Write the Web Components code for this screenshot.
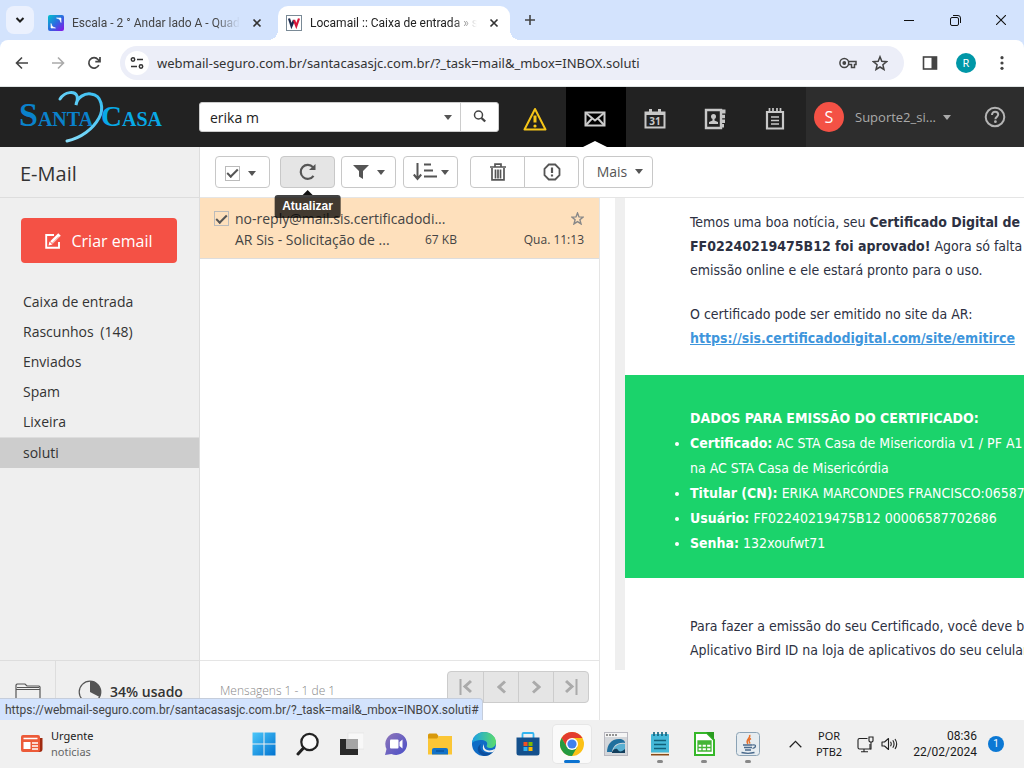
<!DOCTYPE html>
<html lang="pt-BR">
<head>
<meta charset="utf-8">
<title>Locamail :: Caixa de entrada</title>
<meta name="viewport" content="width=device-width, initial-scale=1">
<style>
  html, body { margin: 0; height: 100%; }
  body { font-family: "Open Sans", "Noto Sans", sans-serif; color: #333; overflow: hidden; }
</style>
</head>
<body>
<desktop-screen></desktop-screen>

<script>
const base = `
  *, *::before, *::after { box-sizing: border-box; }
  button { font: inherit; color: inherit; background: none; border: 0; padding: 0; margin: 0; }
  input { font: inherit; color: inherit; margin: 0; }
  a { color: inherit; text-decoration: none; }
`;

function define(name, css, html, setup) {
  const template = document.createElement('template');
  template.innerHTML = `<style>${base}${css}</style>${html}`;
  customElements.define(name, class extends HTMLElement {
    constructor() {
      super();
      this.attachShadow({ mode: 'open' }).append(template.content.cloneNode(true));
    }
    connectedCallback() { if (setup) setup.call(this, this.shadowRoot); }
  });
}

/* [width, height, markup] */
const icons = {
  chevron: [10, 10, '<path d="M1.500 3l3.500 3.500L8.500 3" fill="none" stroke="#1f1f1f" stroke-width="2"/>'],
  escala: [16, 16, '<defs><linearGradient id="g" x1="0" y1="0" x2="1" y2="1"><stop offset="0" stop-color="#00c4cc"/><stop offset=".5" stop-color="#2b6be0"/><stop offset="1" stop-color="#8b10e8"/></linearGradient></defs><rect width="16" height="16" rx="2" fill="url(#g)"/><path d="M8.500 3H13v4.500C12.500 5 11 3.500 8.500 3zM7.500 13H3V8.500C3.500 11 5 12.500 7.500 13z" fill="#fff" stroke="#fff" stroke-width=".6"/>'],
  locamail: [16, 16, '<rect x=".5" y=".5" width="15" height="15" fill="#fff" stroke="#7a8a96"/><path d="M3 3.500l2.500 7.500L8 5" fill="none" stroke="#1b2a4e" stroke-width="2.200"/><path d="M8 5l2.300 6L13 3.500" fill="none" stroke="#d8173a" stroke-width="2.200"/>'],
  close: [10, 10, '<path d="M1.500 1.500l7 7M8.500 1.500l-7 7" stroke="#333" stroke-width="1.700"/>'],
  plus: [12, 12, '<path d="M6 1v10M1 6h10" stroke="#444" stroke-width="1.600"/>'],
  min: [10, 10, '<path d="M0 5.500h10" stroke="#111"/>'],
  restore: [11, 11, '<rect x=".5" y="2.500" width="8" height="8" rx="1.500" fill="none" stroke="#111"/><path d="M3 .5h5a2.500 2.500 0 0 1 2.500 2.500v5" fill="none" stroke="#111"/>'],
  winclose: [10, 10, '<path d="M0 0l10 10M10 0L0 10" stroke="#111" stroke-width="1.100"/>'],
  back: [14, 14, '<path d="M13 7H2M7 1.500L1.500 7 7 12.500" fill="none" stroke="#444" stroke-width="1.600"/>'],
  forward: [14, 14, '<path d="M1 7h11M7 1.500L12.500 7 7 12.500" fill="none" stroke="#aaa" stroke-width="1.600"/>'],
  reload: [14, 14, '<path d="M11.800 9A5.200 5.200 0 1 1 11 3.500L12.500 5M13 1v4.700H8.300" fill="none" stroke="#444" stroke-width="1.700"/>'],
  tune: [14, 14, '<path d="M7 3.500h6M1 10.500h6" stroke="#333" stroke-width="1.700"/><circle cx="3" cy="3.500" r="1.700" fill="none" stroke="#333" stroke-width="1.500"/><circle cx="11" cy="10.500" r="1.700" fill="none" stroke="#333" stroke-width="1.500"/>'],
  key: [18, 12, '<path d="M9.500 4.500H17v3h-1.500v3h-3v-3h-3" fill="none" stroke="#444" stroke-width="1.500"/><circle cx="5.300" cy="6" r="4.400" fill="none" stroke="#444" stroke-width="1.500"/><circle cx="5.300" cy="6" r="1.900" fill="#444"/>'],
  star: [16, 16, '<path d="M8 1.800l1.800 4.500 4.700.4-3.600 3.100 1.100 4.700L8 12l-4 2.500 1.100-4.700-3.600-3.100 4.700-.4z" fill="none" stroke="#444" stroke-width="1.500"/>'],
  panel: [16, 16, '<rect x="1.500" y="2" width="13" height="12" fill="none" stroke="#444" stroke-width="1.600"/><path d="M9.500 2h5v12h-5z" fill="#444"/>'],
  dots: [4, 16, '<circle cx="2" cy="2.700" r="1.600" fill="#444"/><circle cx="2" cy="8" r="1.600" fill="#444"/><circle cx="2" cy="13.300" r="1.600" fill="#444"/>'],
  caret: [8, 5, '<path d="M0 0h8L4 5z" fill="currentColor"/>'],
  search: [14, 14, '<circle cx="5.500" cy="5" r="4" fill="none" stroke="#444" stroke-width="1.500"/><path d="M8.500 8l3.700 3.500" stroke="#444" stroke-width="2.400"/>'],
  warning: [24, 24, '<path d="M12 2L22.500 22.500h-21z" fill="none" stroke="#f5c518" stroke-width="2" stroke-linejoin="round"/><path d="M12 8.500v7" stroke="#f5c518" stroke-width="3"/><circle cx="12" cy="19" r="1.600" fill="#f5c518"/>'],
  mail: [22, 16, '<path d="M1.500 1.500h19v13h-19z" fill="none" stroke="#ccc" stroke-width="2"/><path d="M2 2l9 7.500L20 2M2 14l6-6.500M20 14l-6-6.500" fill="none" stroke="#ccc" stroke-width="2"/>'],
  calendar: [22, 20, '<path d="M1.500 3.500h19v15h-19z" fill="none" stroke="#c8c8c8" stroke-width="2"/><path d="M1 3h4V0h3v3h6V0h3v3h4v3H1z" fill="#c8c8c8"/><text x="11" y="15.500" text-anchor="middle" font-family="Open Sans" font-weight="700" font-size="10" fill="#c8c8c8">31</text>'],
  contacts: [22, 22, '<path d="M2 2h15v18H2z" fill="none" stroke="#c8c8c8" stroke-width="2.400"/><path d="M18 1.500h3.500v4H18zM18 6.800h3v3.500h-3zM18 11.500h3v3.500h-3zM17 16h3v3.500h-3z" fill="#c8c8c8"/><circle cx="9.500" cy="8.500" r="2.500" fill="#c8c8c8"/><path d="M8.500 10h2v2.500l3.500 1.500v2H5v-2l3.500-1.500z" fill="#c8c8c8"/>'],
  notes: [20, 22, '<path d="M2 4h16v16.500H2z" fill="none" stroke="#c8c8c8" stroke-width="2.200"/><path d="M4.500 0v5M8 0v5M12 0v5M15.500 0v5M6 9h8M6 12.500h8M6 16h8" stroke="#c8c8c8" stroke-width="1.700"/>'],
  help: [22, 22, '<circle cx="11" cy="11" r="9.300" fill="none" stroke="#b4b4b4" stroke-width="2"/><path d="M8 9c0-4.500 6.200-4 6.200-.4 0 2.400-2.800 2.200-2.800 4.700" fill="none" stroke="#b4b4b4" stroke-width="2"/><circle cx="11.400" cy="15.700" r="1.400" fill="#b4b4b4"/>'],
  refresh: [18, 18, '<path d="M14.500 12.800A7 7 0 1 1 14 4.200" fill="none" stroke="#555" stroke-width="2.200"/><path d="M16.500 1v6h-6.500z" fill="#555"/>'],
  filter: [16, 14, '<path d="M0 0h16L10 6v8L6 11.500V6z" fill="#555"/>'],
  sort: [24, 18, '<path d="M4.500 0v15M.8 11.500L4.500 16l3.700-4.500" fill="none" stroke="#555" stroke-width="2"/><path d="M11 1.500h7M11 7.500h9M11 13.500h13" stroke="#555" stroke-width="2.200"/>'],
  trash: [16, 18, '<path d="M0 4h16M5 4V1.200h6V4M2 5v11.800h12V5M5.500 6.500v9M8 6.500v9M10.500 6.500v9" fill="none" stroke="#555" stroke-width="1.700"/>'],
  alert: [18, 18, '<path d="M5.800 1.500h6.400l4.300 4.300v6.400l-4.300 4.300H5.800L1.500 12.200V5.800z" fill="none" stroke="#555" stroke-width="1.800"/><path d="M9 4.500v5.500M9 11.500v2" stroke="#555" stroke-width="2.200"/>'],
  compose: [16, 16, '<path d="M9 2H1.200v12.800H14V9" fill="none" stroke="#fff" stroke-width="1.900"/><path d="M14.500 1.500l-8 8" stroke="#fff" stroke-width="3.600"/><path d="M4.500 8.500l3 3-4 1z" fill="#fff"/><path d="M14 3.500l-7 7" stroke="#f45145" stroke-width=".7"/>'],
  liststar: [13, 13, '<path d="M6.500 1l1.500 3.900 4.200.2-3.300 2.700 1.100 4.100-3.500-2.300L3 11.900l1.100-4.100L.8 5.100 5 4.900z" fill="none" stroke="#888" stroke-width="1.400"/>'],
  folder: [26, 22, '<path d="M1 21.500V2l1-1h8l2 2h12l1 1v17.500M1 6.500h24M2 4.500h22" fill="none" stroke="#555" stroke-width="1.200"/>'],
  pie: [24, 24, '<circle cx="12" cy="12" r="10.800" fill="none" stroke="#555" stroke-width="1.200"/><path d="M12 12V1.200A10.800 10.800 0 0 1 21.600 17z" fill="#555"/>'],
  first: [13, 16, '<path d="M1.500 0v16" stroke="#aaa" stroke-width="2"/><path d="M12 2L6 7.500l6 5.500" fill="none" stroke="#aaa" stroke-width="3"/>'],
  prev: [9, 14, '<path d="M8 1.500L2 7l6 5.500" fill="none" stroke="#aaa" stroke-width="3"/>'],
  next: [9, 14, '<path d="M1 1.500L7 7l-6 5.500" fill="none" stroke="#aaa" stroke-width="3"/>'],
  last: [13, 16, '<path d="M11.500 0v16" stroke="#aaa" stroke-width="2"/><path d="M1 2l6 5.500L1 13" fill="none" stroke="#aaa" stroke-width="3"/>'],
  news: [22, 18, '<path d="M17 3h4.500v11a3 3 0 0 1-3 3H15z" fill="#a02a10"/><rect width="19" height="17" rx="2" fill="#ec5a38"/><path d="M2.500 3.500h14M11 8h6M11 11h6M11 14h6" stroke="#fff" stroke-width="1.500"/><rect x="2.500" y="7" width="7" height="7" fill="#fff"/>'],
  start: [24, 24, '<defs><linearGradient id="g" x1="0" y1="0" x2="1" y2="1"><stop offset="0" stop-color="#4cc8fa"/><stop offset="1" stop-color="#0072d0"/></linearGradient></defs><path d="M.5.5h11v11H.5zM12.500.5h11v11h-11zM.5 12.500h11v11H.5zM12.500 12.500h11v11h-11z" fill="url(#g)"/>'],
  find: [24, 24, '<circle cx="13.500" cy="10" r="8.200" fill="#fafafa" stroke="#222" stroke-width="2.200"/><path d="M7.500 16L2 22" stroke="#222" stroke-width="3" stroke-linecap="round"/>'],
  taskview: [24, 24, '<rect x="8" y="1" width="16" height="16" fill="#f8f8f8" stroke="#e2e2e2" stroke-width=".6"/><rect y="7" width="18" height="16" fill="#2a2a2a"/><path d="M6 7h12v10H6z" fill="#a5a5a5"/>'],
  chat: [24, 24, '<defs><linearGradient id="g" x1="0" y1="0" x2="1" y2="1"><stop offset="0" stop-color="#8f76b8"/><stop offset="1" stop-color="#4a4fc8"/></linearGradient></defs><path d="M12.500 1a11 11 0 1 1-5 21L1 23l1.500-6A11 11 0 0 1 12.500 1z" fill="url(#g)"/><rect x="6" y="7.500" width="8.500" height="9" rx="1" fill="#fff"/><path d="M15.500 10l3-2.500v9l-3-2.500z" fill="#fff"/>'],
  explorer: [24, 24, '<path d="M0 3a1.500 1.500 0 0 1 1.500-1.500h7L10.500 4v4H0z" fill="#d8990c"/><path d="M0 6.500h9l2-2.500h13v18.500H0z" fill="#fbc636"/><path d="M4 22.500V18a2 2 0 0 1 2-2h12a2 2 0 0 1 2 2v4.500z" fill="#1272c8"/><path d="M8 19h8" stroke="#0a559f" stroke-width="1.500"/>'],
  edge: [24, 24, '<defs><linearGradient id="g" x1="0" x2="1"><stop offset="0" stop-color="#1aa0e8"/><stop offset="1" stop-color="#5bdc6a"/></linearGradient></defs><circle cx="12" cy="12" r="12" fill="#0f6cc6"/><path d="M0 11C1 4 6 0 12 0c7 0 12 5 12 10 0 4-3 6-6 6-3 0-4-1.500-3-3C17 8 6 6 0 11z" fill="url(#g)"/><path d="M9 12c-3 6 3 11 12 8-3 3-6 4-9 4-6-2-9-8-3-12z" fill="#0c4f9e"/><path d="M12 12c-1 7 6 8 11.500 4.500L21 20c-6 1-13-1-9-8z" fill="#f0f0f0"/>'],
  store: [24, 24, '<path d="M6.500 6V2a1 1 0 0 1 1-1h9a1 1 0 0 1 1 1v4" fill="none" stroke="#32b5f0" stroke-width="1.800"/><path d="M.5 5.500h23V21a2.500 2.500 0 0 1-2.500 2.500H3A2.500 2.500 0 0 1 .5 21z" fill="#14508c"/><path d="M7.500 10h4v4h-4z" fill="#f25022"/><path d="M12.500 10h4v4h-4z" fill="#7fba00"/><path d="M7.500 15h4v4h-4z" fill="#30b0f0"/><path d="M12.500 15h4v4h-4z" fill="#ffb900"/>'],
  chrome: [24, 24, '<circle cx="12" cy="12" r="12" fill="#fbc116"/><path d="M12 6h10.400A12 12 0 0 0 1.600 6l5.200 9z" fill="#e33b2e"/><path d="M1.600 6A12 12 0 0 0 12 24l5.200-9H6.800z" fill="#249a41"/><circle cx="12" cy="12" r="6" fill="#fff"/><circle cx="12" cy="12" r="4.600" fill="#3f80ee"/>'],
  viewer: [24, 24, '<rect x=".5" y=".5" width="23" height="23" fill="#d3d6da" stroke="#b8b8c0"/><path d="M1 1h22v4H1z" fill="#f5f5f5"/><path d="M2 3h11" stroke="#333" stroke-width="1.200" stroke-dasharray="2 1"/><path d="M3 20c0-7 4-13 12-13 4 0 6 2 6 4-8-1-12 3-13 9z" fill="#1f6f9e"/><path d="M9 20c0-6 6-9 12-8v8z" fill="#5bb0d2"/><path d="M8 20c2-4 5-4 6-2s4 2 7-1v4H8z" fill="#123e5c"/>'],
  notepad: [24, 24, '<rect x="3" y="2" width="18" height="20" rx="1" fill="#45b8d8"/><path d="M3 22h18v1.500H3z" fill="#8a4a18"/><path d="M3 20.500h18v1.500H3z" fill="#f1e6d2"/><path d="M6 0v4M10 0v4M14 0v4M18 0v4M6 8.500h12M6 12.500h12M6 16.500h12" stroke="#11607a" stroke-width="1.600"/>'],
  calc: [24, 24, '<path d="M3 1h12l7 7v15H3z" fill="#fff" stroke="#35b729" stroke-width="2"/><path d="M14 0h8v8z" fill="#2a9c20"/><path d="M6 9h13v10H6zM6 12h13M6 15.500h13M10 9v10M14.500 9v10" fill="none" stroke="#43b536" stroke-width="1.300"/><path d="M6 9h13v3H6z" fill="#43b536"/>'],
  java: [24, 24, '<rect x=".5" y=".5" width="23" height="23" rx="3" fill="#e6ecf0" stroke="#8aa2b5"/><path d="M13.500 3c2 3-5 4.500-1.500 9M15 6.500c-3 1.500-2 3-1 5" fill="none" stroke="#e8702a" stroke-width="1.500"/><path d="M7 13h9.500M8 15.500h8M9 18h6M5.500 20.500c4 1 9 1 13 0" fill="none" stroke="#4a6a8c" stroke-width="1.300"/><path d="M16.500 13c4-1 4 2.500 0 3.500" fill="none" stroke="#4a6a8c" stroke-width="1.200"/>'],
  up: [13, 8, '<path d="M.7 7.200l5.800-5.800 5.800 5.800" fill="none" stroke="#222" stroke-width="1.300"/>'],
  network: [17, 17, '<path d="M10.500 2.500h-8a1.500 1.500 0 0 0-1.500 1.500v7.500a1.500 1.500 0 0 0 1.500 1.500H13V8M7 13v2.500M4 15.700h7" fill="none" stroke="#222" stroke-width="1.100"/><path d="M12 1h4v4l-1 1h-2l-1-1zM14 6v7h-1" fill="none" stroke="#222" stroke-width="1.100"/>'],
  sound: [17, 14, '<path d="M1 5h2.500L7.500 1.500v11L3.500 9H1z" fill="none" stroke="#222" stroke-width="1.100" stroke-linejoin="round"/><path d="M9.500 4.800q1.500 2.200 0 4.400M11.800 3.300q2.500 3.700 0 7.400M14 2q3.400 5 0 10" fill="none" stroke="#222" stroke-width="1.100"/>']
};

customElements.define('ui-icon', class extends HTMLElement {
  constructor() { super(); this.attachShadow({ mode: 'open' }); }
  connectedCallback() {
    const [w, h, body] = icons[this.getAttribute('name')];
    this.shadowRoot.innerHTML =
      `<style>:host{display:inline-flex;flex:none}svg{display:block}</style>
       <svg width="${w}" height="${h}" viewBox="0 0 ${w} ${h}" aria-hidden="true">${body}</svg>`;
  }
});

/* ---------- Browser ---------- */

define('browser-tab', `
  :host { display: flex; align-items: center; width: 238px; height: 34px; padding: 0 16px 0 8px; gap: 8px; font: 12px Roboto, sans-serif; color: #444; position: relative; }
  :host([active]) { background: #fff; border-radius: 10px 10px 0 0; width: 232px; padding-right: 11px; color: #222; }
  :host([active])::before, :host([active])::after { content: ""; position: absolute; bottom: 0; width: 10px; height: 10px; }
  :host([active])::before { right: 100%; background: radial-gradient(circle at 0 0, transparent 10px, #fff 10px); }
  :host([active])::after { left: 100%; background: radial-gradient(circle at 100% 0, transparent 10px, #fff 10px); }
  .title { flex: 1; min-width: 0; overflow: hidden; white-space: nowrap; -webkit-mask-image: linear-gradient(to right, #000 85%, transparent); mask-image: linear-gradient(to right, #000 85%, transparent); }
  button { display: grid; place-items: center; width: 10px; height: 16px; margin-left: 4px; }
`, `<slot name="icon"></slot><span class="title"><slot></slot></span><button aria-label="Fechar guia"><ui-icon name="close"></ui-icon></button>`);

define('browser-tabs', `
  :host { display: flex; align-items: flex-end; height: 40px; padding-left: 6px; background: #d3e3fd; font-family: "Noto Sans", sans-serif; }
  .list { width: 28px; height: 28px; border-radius: 8px; background: #ebf1fe; display: grid; place-items: center; margin: 0 6px 6px 0; }
  .new { width: 28px; height: 28px; display: grid; place-items: center; margin: 0 0 6px 6px; }
  .window { display: flex; margin-left: auto; height: 40px; }
  .window button { width: 46px; display: grid; place-items: center; }
`, `
  <button class="list" aria-label="Pesquisar guias"><ui-icon name="chevron"></ui-icon></button>
  <browser-tab><ui-icon slot="icon" name="escala"></ui-icon>Escala - 2 ° Andar lado A - Quadro</browser-tab>
  <browser-tab active><ui-icon slot="icon" name="locamail"></ui-icon>Locamail :: Caixa de entrada » soluti</browser-tab>
  <button class="new" aria-label="Nova guia"><ui-icon name="plus"></ui-icon></button>
  <div class="window">
    <button aria-label="Minimizar"><ui-icon name="min"></ui-icon></button>
    <button aria-label="Restaurar"><ui-icon name="restore"></ui-icon></button>
    <button aria-label="Fechar"><ui-icon name="winclose"></ui-icon></button>
  </div>`);

define('browser-toolbar', `
  :host { display: block; background: #d3e3fd; font-family: "Noto Sans", sans-serif; }
  .bar { display: flex; align-items: center; height: 47px; padding: 0 4px; background: #fff; border-radius: 8px 8px 0 0; border-bottom: 1px solid #dfe4e4; }
  .bar > button { width: 36px; height: 36px; display: grid; place-items: center; }
  .address { flex: 1; display: flex; align-items: center; height: 34px; margin: 0 8px; padding: 0 8px 0 5px; border-radius: 17px; background: #eceef8; }
  .address button { width: 32px; height: 32px; display: grid; place-items: center; }
  .address .site { width: 24px; height: 24px; border-radius: 50%; background: #fff; }
  input { flex: 1; min-width: 0; border: 0; outline: 0; background: none; padding: 0 8px; font-size: 13px; color: #333; }
  .profile { width: 20px; height: 20px; border-radius: 50%; background: #0097a7; color: #fff; font-size: 11px; line-height: 20px; text-align: center; }
`, `
  <div class="bar">
    <button aria-label="Voltar"><ui-icon name="back"></ui-icon></button>
    <button aria-label="Avançar"><ui-icon name="forward"></ui-icon></button>
    <button aria-label="Recarregar"><ui-icon name="reload"></ui-icon></button>
    <div class="address">
      <button class="site" aria-label="Informações do site"><ui-icon name="tune"></ui-icon></button>
      <input aria-label="Endereço" value="webmail-seguro.com.br/santacasasjc.com.br/?_task=mail&amp;_mbox=INBOX.soluti">
      <button aria-label="Senhas"><ui-icon name="key"></ui-icon></button>
      <button aria-label="Favoritos"><ui-icon name="star"></ui-icon></button>
    </div>
    <button aria-label="Painel lateral"><ui-icon name="panel"></ui-icon></button>
    <button aria-label="Perfil"><span class="profile">R</span></button>
    <button aria-label="Menu"><ui-icon name="dots"></ui-icon></button>
  </div>`);

/* ---------- Webmail header ---------- */

define('brand-logo', `
  :host { display: block; width: 199px; height: 60px; flex: none; }
  svg { display: block; }
`, `
  <svg width="199" height="60" viewBox="0 0 199 60" role="img" aria-label="Santa Casa" font-family="Liberation Serif, serif" font-weight="700">
    <defs>
      <linearGradient id="sw" x1="0" y1="1" x2="1" y2="0"><stop offset="0" stop-color="#8fe0fa"/><stop offset="1" stop-color="#35bdf2"/></linearGradient>
    </defs>
    <text x="19" y="39" font-size="34" fill="#0a82cc">S<tspan font-size="20">ANTA</tspan></text>
    <path d="M60 12C65 4 75 4 77 9c1 3 0 6-1 9C77 10 85 6 91 7c11 1 13 15 8 24C93 42 81 51 67 54" fill="none" stroke="url(#sw)" stroke-width="3" stroke-linecap="round"/>
    <text x="101" y="39" font-size="29" fill="#08a9e6">C<tspan font-size="20">ASA</tspan></text>
  </svg>`);

define('mail-header', `
  :host { display: flex; align-items: center; height: 60px; background: #222; }
  form { display: flex; width: 300px; height: 30px; background: #fff; border: 1px solid #ccc; border-radius: 3px; color: #555; }
  input { flex: 1; min-width: 0; border: 0; outline: 0; background: none; padding: 0 10px; font-size: 14px; color: #222; }
  .options { width: 25px; display: grid; place-items: center; }
  .go { width: 38px; border-left: 1px solid #ccc; display: grid; place-items: center; }
  nav { display: flex; margin-left: auto; height: 60px; }
  nav a { position: relative; width: 60px; display: grid; place-items: center; padding: 3px 2px 0 0; }
  nav a[aria-current] { background: #000; }
  nav a[aria-current]::after { content: ""; position: absolute; left: 17px; bottom: 0; width: 24px; height: 6px; background: #fff; clip-path: polygon(50% 0, 100% 100%, 0 100%); }
  .account { display: flex; align-items: center; width: 218px; height: 60px; padding: 0 18px 0 8px; background: #2d2d2d; color: #aaa; font-size: 13px; }
  .avatar { width: 30px; height: 30px; border-radius: 50%; background: #f45145; color: #fff; font-size: 16px; line-height: 30px; text-align: center; }
  .user { display: flex; align-items: center; gap: 7px; margin-left: 11px; }
  .help { margin-left: auto; display: grid; }
`, `
  <brand-logo></brand-logo>
  <form>
    <input type="text" aria-label="Pesquisar" value="erika m">
    <button type="button" class="options" aria-label="Opções"><ui-icon name="caret"></ui-icon></button>
    <button type="button" class="go" aria-label="Buscar"><ui-icon name="search"></ui-icon></button>
  </form>
  <nav>
    <a href="#" aria-label="Avisos"><ui-icon name="warning"></ui-icon></a>
    <a href="#" aria-label="E-mail" aria-current="page"><ui-icon name="mail"></ui-icon></a>
    <a href="#" aria-label="Agenda"><ui-icon name="calendar"></ui-icon></a>
    <a href="#" aria-label="Contatos"><ui-icon name="contacts"></ui-icon></a>
    <a href="#" aria-label="Notas"><ui-icon name="notes"></ui-icon></a>
  </nav>
  <div class="account">
    <span class="avatar">S</span>
    <button class="user">Suporte2_si... <ui-icon name="caret"></ui-icon></button>
    <button class="help" aria-label="Ajuda"><ui-icon name="help"></ui-icon></button>
  </div>`);

/* ---------- Sidebar ---------- */

define('mail-sidebar', `
  :host { display: flex; flex-direction: column; width: 200px; background: #efefef; border-right: 1px solid #ddd; }
  h1 { margin: 0; height: 51px; padding: 13px 20px 0; font-size: 20px; line-height: 28px; font-weight: 400; border-bottom: 1px solid #ddd; }
  .compose { display: flex; align-items: center; justify-content: center; gap: 10px; height: 45px; margin: 20px 22px 24px 21px; border-radius: 4px; background: #f45145; color: #fff; font-size: 16px; }
  ul { list-style: none; margin: 0; padding: 0; font-size: 14px; line-height: 30px; }
  li a { display: block; padding-left: 23px; }
  li a span { margin-left: 3px; }
  li a[aria-current] { background: #cdcdcd; border-top: 1px solid #ddd; }
  footer { display: flex; height: 60px; margin-top: auto; border-top: 1px solid #ddd; }
  .folders { width: 56px; padding-top: 6px; border-right: 1px solid #ddd; display: grid; place-items: center; }
  .quota { flex: 1; display: flex; align-items: center; justify-content: center; gap: 8px; padding: 2px 0 0 6px; font-size: 14px; font-weight: 600; }
`, `
  <h1>E-Mail</h1>
  <button class="compose"><ui-icon name="compose"></ui-icon>Criar email</button>
  <ul>
    <li><a href="#">Caixa de entrada</a></li>
    <li><a href="#">Rascunhos <span>(148)</span></a></li>
    <li><a href="#">Enviados</a></li>
    <li><a href="#">Spam</a></li>
    <li><a href="#">Lixeira</a></li>
    <li><a href="#" aria-current="true">soluti</a></li>
  </ul>
  <footer>
    <button class="folders" aria-label="Pastas"><ui-icon name="folder"></ui-icon></button>
    <div class="quota"><ui-icon name="pie"></ui-icon>34% usado</div>
  </footer>`);

/* ---------- Toolbar ---------- */

define('check-box', `
  :host { display: inline-flex; }
  input { appearance: none; width: 15px; height: 15px; border: 1px solid #bbb; display: grid; place-items: center; }
  input:checked::before { content: ""; width: 11px; height: 6px; border: solid #555; border-width: 0 0 2px 2px; transform: translateY(-1px) rotate(-45deg); }
`, `<input type="checkbox" checked>`, function (root) {
  root.querySelector('input').setAttribute('aria-label', this.getAttribute('label'));
});

define('mail-toolbar', `
  :host { display: flex; align-items: flex-start; height: 51px; padding: 9px 15px 0; border-bottom: 1px solid #e5e5e5; color: #555; }
  .btn { position: relative; display: flex; align-items: center; justify-content: center; gap: 8px; width: 55px; height: 32px; border: 1px solid #c8c8c8; border-radius: 4px; background: #fff; font-size: 14px; }
  .select { margin-right: 10px; padding: 2px 4px 0 0; }
  .pressed { background: #e5e5e5; margin-right: 6px; }
  .filter { margin-right: 7px; }
  .sort { gap: 4px; margin-right: 12px; }
  .left { border-radius: 4px 0 0 4px; }
  .right { border-radius: 0 4px 4px 0; margin-left: -1px; margin-right: 4px; }
  .more { width: 70px; padding: 0 0 2px 4px; }
  .tip { position: absolute; top: 38px; left: 50%; transform: translateX(-50%); padding: 0 8px; border-radius: 3px; background: rgba(0,0,0,.74); color: #fff; font: 700 12px/23px "Liberation Sans", sans-serif; z-index: 2; }
  .tip::before { content: ""; position: absolute; left: 50%; margin-left: -5px; bottom: 100%; border: 5px solid transparent; border-top: 0; border-bottom-color: #111; }
`, `
  <div class="btn select"><check-box label="Selecionar"></check-box><ui-icon name="caret"></ui-icon></div>
  <button class="btn pressed" aria-label="Atualizar"><ui-icon name="refresh"></ui-icon><span class="tip" role="tooltip">Atualizar</span></button>
  <button class="btn filter" aria-label="Filtrar"><ui-icon name="filter"></ui-icon><ui-icon name="caret"></ui-icon></button>
  <button class="btn sort" aria-label="Ordenar"><ui-icon name="sort"></ui-icon><ui-icon name="caret"></ui-icon></button>
  <button class="btn left" aria-label="Excluir"><ui-icon name="trash"></ui-icon></button>
  <button class="btn right" aria-label="Spam"><ui-icon name="alert"></ui-icon></button>
  <button class="btn more">Mais<ui-icon name="caret"></ui-icon></button>`);

/* ---------- Message list ---------- */

define('message-row', `
  :host { display: grid; grid-template-columns: 15px 184px 1fr auto; grid-auto-rows: 21px; column-gap: 6px; align-items: center; padding: 10px 15px 8px 14px; height: 61px; background: #fee0bc; border-bottom: 1px solid #ddd; font-size: 14px; line-height: 21px; color: #444; }
  .from { grid-column: 2 / 4; }
  .star { justify-self: end; display: grid; }
  .subject { grid-column: 2; }
  .size, .date { font-size: 12px; }
`, `
  <check-box label="Selecionar mensagem"></check-box>
  <span class="from"><slot name="from"></slot></span>
  <button class="star" aria-label="Marcar"><ui-icon name="liststar"></ui-icon></button>
  <span class="subject"><slot name="subject"></slot></span>
  <span class="size"><slot name="size"></slot></span>
  <span class="date"><slot name="date"></slot></span>`);

define('message-list', `
  :host { display: flex; flex-direction: column; width: 400px; border-right: 1px solid #e5e5e5; }
  footer { display: flex; justify-content: space-between; height: 60px; margin-top: auto; padding: 10px 10px 0 20px; border-top: 1px solid #e5e5e5; font-size: 12px; color: #888; line-height: 40px; font-weight: 300; }
  .pager { display: flex; height: 32px; border: 1px solid #ccc; border-radius: 4px; background: #e5e5e5; overflow: hidden; }
  .pager button { width: 35px; display: grid; place-items: center; }
  .pager button + button { border-left: 1px solid #ccc; }
`, `
  <message-row>
    <span slot="from">no-reply@mail.sis.certificadodi...</span>
    <span slot="subject">AR Sis - Solicitação de ...</span>
    <span slot="size">67 KB</span>
    <span slot="date">Qua. 11:13</span>
  </message-row>
  <footer>
    <span>Mensagens 1 - 1 de 1</span>
    <div class="pager">
      <button aria-label="Primeira" disabled><ui-icon name="first"></ui-icon></button>
      <button aria-label="Anterior" disabled><ui-icon name="prev"></ui-icon></button>
      <button aria-label="Próxima" disabled><ui-icon name="next"></ui-icon></button>
      <button aria-label="Última" disabled><ui-icon name="last"></ui-icon></button>
    </div>
  </footer>`);

/* ---------- Preview ---------- */

define('message-preview', `
  :host { display: block; flex: 1; min-width: 0; overflow: hidden; padding: 0 0 50px 15px; }
  article { height: 100%; overflow: hidden; border-left: 10px solid #efefef; padding-top: 12px; font-family: Tahoma, "DejaVu Sans Condensed", "Noto Sans", sans-serif; font-size: 14px; line-height: 24px; color: #2d3142; white-space: nowrap; }
  p { margin: 0 0 20px; padding-left: 65px; }
  p a { color: #3f96dc; font-weight: 700; text-decoration: underline; }
  .data { margin: 25px 0 36px; padding: 31px 0 22px 65px; background: #1bd36b; color: #fff; line-height: 25px; }
  h2 { margin: 0; font-size: inherit; }
  ul { margin: 0; padding: 0; }
`, `
  <article>
    <p>Temos uma boa notícia, seu <b>Certificado Digital de n<br>FF02240219475B12 foi aprovado!</b> Agora só falta<br>emissão online e ele estará pronto para o uso.</p>
    <p>O certificado pode ser emitido no site da AR:<br><a href="#">https://sis.certificadodigital.com/site/emitirce</a></p>
    <section class="data">
      <h2>DADOS PARA EMISSÃO DO CERTIFICADO:</h2>
      <ul>
        <li><b>Certificado:</b> AC STA Casa de Misericordia v1 / PF A1<br>na AC STA Casa de Misericórdia</li>
        <li><b>Titular (CN):</b> ERIKA MARCONDES FRANCISCO:06587</li>
        <li><b>Usuário:</b> FF02240219475B12 00006587702686</li>
        <li><b>Senha:</b> 132xoufwt71</li>
      </ul>
    </section>
    <p>Para fazer a emissão do seu Certificado, você deve bai<br>Aplicativo Bird ID na loja de aplicativos do seu celular</p>
  </article>`);

define('webmail-app', `
  :host { display: flex; flex-direction: column; flex: 1; min-height: 0; background: #fff; position: relative; }
  .body { display: flex; flex: 1; min-height: 0; }
  main { display: flex; flex-direction: column; flex: 1; min-width: 0; }
  .split { display: flex; flex: 1; min-height: 0; }
  .status { position: absolute; left: 0; bottom: 0; height: 22px; padding: 0 3px 0 5px; background: #d3e3fd; border: solid #c5cddb; border-width: 1px 1px 0 0; border-radius: 0 4px 0 0; font: 12px/23px Roboto, sans-serif; color: #444; }
`, `
  <mail-header></mail-header>
  <div class="body">
    <mail-sidebar></mail-sidebar>
    <main>
      <mail-toolbar></mail-toolbar>
      <div class="split">
        <message-list></message-list>
        <message-preview></message-preview>
      </div>
    </main>
  </div>
  <div class="status">https://webmail-seguro.com.br/santacasasjc.com.br/?_task=mail&amp;_mbox=INBOX.soluti#</div>`);

/* ---------- Taskbar ---------- */

define('task-button', `
  :host { display: block; }
  button { position: relative; width: 38px; height: 38px; margin: 0 3px; display: grid; place-items: center; border-radius: 4px; }
  :host([active]) button { background: #fafafa; box-shadow: 0 0 0 1px #e6e6e6; }
  :host([running]) button::after { content: ""; position: absolute; left: 16px; bottom: 0; width: 6px; height: 3px; border-radius: 2px; background: #888; }
  :host([active]) button::after { left: 11px; width: 16px; background: #0b72d0; }
`, `<button><slot></slot></button>`, function (root) {
  root.querySelector('button').setAttribute('aria-label', this.getAttribute('label'));
});

define('task-bar', `
  :host { display: grid; grid-template-columns: 242px 1fr auto; align-items: center; height: 48px; background: #f0f0f0; font-family: "Noto Sans", sans-serif; font-size: 11px; line-height: 16px; color: #1a1a1a; }
  .news { display: flex; align-items: center; gap: 8px; padding-left: 21px; text-align: left; }
  .news small { display: block; font-size: inherit; color: #666; }
  .apps { display: flex; }
  .tray { display: flex; align-items: center; padding-right: 20px; font-family: Roboto, sans-serif; font-size: 12px; }
  .lang { margin: 0 15px 0 14px; text-align: center; font-family: "Noto Sans", sans-serif; font-size: 11px; }
  .sound { margin: 0 15px 0 7px; }
  .clock { text-align: right; margin-right: 11px; }
  .count { width: 16px; height: 16px; border-radius: 50%; background: #0b78d4; color: #fff; font-size: 10px; text-align: center; }
`, `
  <button class="news"><ui-icon name="news"></ui-icon><span>Urgente<small>noticias</small></span></button>
  <div class="apps">
    <task-button label="Iniciar"><ui-icon name="start"></ui-icon></task-button>
    <task-button label="Pesquisar"><ui-icon name="find"></ui-icon></task-button>
    <task-button label="Visão de tarefas"><ui-icon name="taskview"></ui-icon></task-button>
    <task-button label="Chat"><ui-icon name="chat"></ui-icon></task-button>
    <task-button label="Explorador de Arquivos"><ui-icon name="explorer"></ui-icon></task-button>
    <task-button label="Edge"><ui-icon name="edge"></ui-icon></task-button>
    <task-button label="Loja"><ui-icon name="store"></ui-icon></task-button>
    <task-button label="Chrome" running active><ui-icon name="chrome"></ui-icon></task-button>
    <task-button label="Visualizador"><ui-icon name="viewer"></ui-icon></task-button>
    <task-button label="Bloco de notas" running><ui-icon name="notepad"></ui-icon></task-button>
    <task-button label="Planilha" running><ui-icon name="calc"></ui-icon></task-button>
    <task-button label="Java" running><ui-icon name="java"></ui-icon></task-button>
  </div>
  <div class="tray">
    <button aria-label="Ícones ocultos"><ui-icon name="up"></ui-icon></button>
    <span class="lang">POR<br>PTB2</span>
    <ui-icon name="network"></ui-icon>
    <ui-icon class="sound" name="sound"></ui-icon>
    <span class="clock">08:36<br>22/02/2024</span>
    <span class="count">1</span>
  </div>`);

define('desktop-screen', `
  :host { display: flex; flex-direction: column; height: 100vh; }
`, `
  <browser-tabs></browser-tabs>
  <browser-toolbar></browser-toolbar>
  <webmail-app></webmail-app>
  <task-bar></task-bar>`);
</script>
</body>
</html>
